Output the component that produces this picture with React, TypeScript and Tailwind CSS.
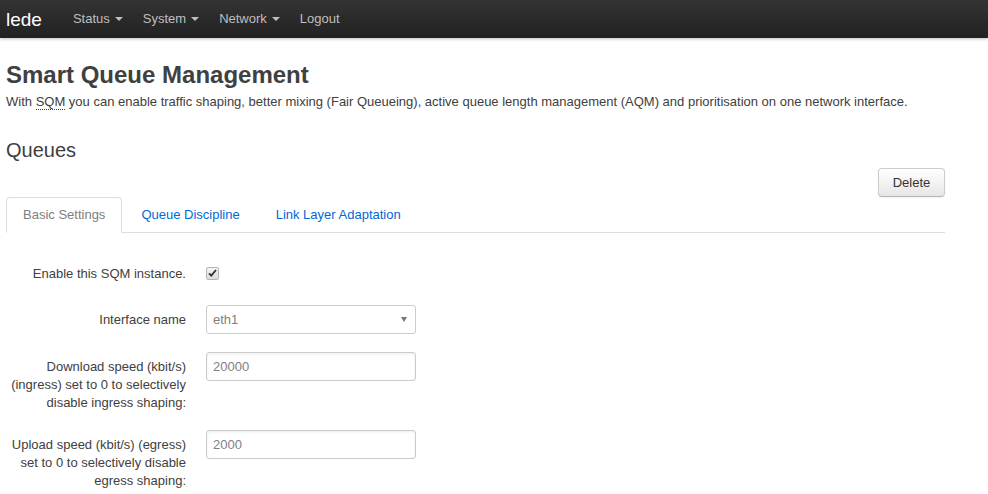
// Smart Queue Management — LuCI (bootstrap theme) settings page

const navItems = [
  { label: "Status", caret: true },
  { label: "System", caret: true },
  { label: "Network", caret: true },
  { label: "Logout", caret: false },
];

function Caret() {
  return (
    <span className="ml-[5px] inline-block h-0 w-0 border-x-[4px] border-t-[4px] border-x-transparent border-t-[#bfbfbf] align-middle" />
  );
}

function FormRow({ label, children }: { label: React.ReactNode; children: React.ReactNode }) {
  return (
    <div className="mb-[18px] flex items-start">
      <div className="w-[180px] shrink-0 pt-[6px] text-right leading-[18px] text-[#404040]">{label}</div>
      <div className="ml-[20px] flex min-h-[28px] items-center">{children}</div>
    </div>
  );
}

function TextField({ value }: { value: string }) {
  return (
    <div className="flex h-[29px] w-[210px] items-center rounded-[3px] border border-[#ccc] px-[6px] text-[#808080] shadow-[inset_0_1px_3px_rgba(0,0,0,0.08)]">
      {value}
    </div>
  );
}

export default function App() {
  return (
    <div className="min-h-screen bg-white text-[13px] text-[#404040]" style={{ fontFamily: '"Liberation Sans", Arial, sans-serif' }}>
      {/* Top navbar */}
      <nav className="flex h-[38px] items-center bg-gradient-to-b from-[#333] to-[#222] shadow-[0_1px_3px_rgba(0,0,0,0.25)]">
        <span className="pl-[6px] pr-[21px] text-[19px] leading-none text-white">lede</span>
        <div className="flex">
          {navItems.map((item) => (
            <span key={item.label} className="flex items-center px-[10px] text-[#bfbfbf]">
              {item.label}
              {item.caret && <Caret />}
            </span>
          ))}
        </div>
      </nav>

      <div className="pl-[6px] pr-[43px]">
        <h2 className="mt-[19px] text-[24px] font-bold leading-[36px]">Smart Queue Management</h2>
        <p className="leading-[18px]">
          With <abbr className="border-b border-dotted border-[#404040] no-underline">SQM</abbr> you can enable traffic shaping, better
          mixing (Fair Queueing), active queue length management (AQM) and prioritisation on one network interface.
        </p>

        <h3 className="mt-[24px] text-[20px] leading-[30px]">Queues</h3>

        <div className="mt-[3px] flex justify-end">
          <button className="h-[29px] w-[67px] rounded-[4px] border border-[#ccc] border-b-[#b3b3b3] bg-gradient-to-b from-white to-[#e6e6e6] text-[#333] shadow-[0_1px_2px_rgba(0,0,0,0.05)]">
            Delete
          </button>
        </div>

        {/* Tabs */}
        <ul className="flex h-[36px] border-b border-[#ddd]">
          <li className="-mb-px flex h-[36px] items-center rounded-t-[4px] border border-[#ddd] border-b-white bg-white px-[16px] text-[#808080]">
            Basic Settings
          </li>
          <li className="ml-[2px] flex items-center px-[17px] text-[#0069d6]">Queue Discipline</li>
          <li className="ml-[2px] flex items-center px-[17px] text-[#0069d6]">Link Layer Adaptation</li>
        </ul>

        {/* Form */}
        <div className="mt-[26px]">
          <FormRow label="Enable this SQM instance.">
            <span className="flex h-[13px] w-[13px] items-center justify-center rounded-[2px] border border-[#b5b5b5] bg-gradient-to-b from-[#f4f4f4] to-[#dcdcdc]">
              <svg width="9" height="8" viewBox="0 0 9 8">
                <path d="M1 4.3 L3.3 6.6 L8 1" fill="none" stroke="#333" strokeWidth="1.8" />
              </svg>
            </span>
          </FormRow>

          <FormRow label="Interface name">
            <div className="flex h-[29px] w-[210px] items-center justify-between rounded-[3px] border border-[#ccc] pl-[6px] pr-[8px] text-[#808080]">
              <span>eth1</span>
              <span className="inline-block h-0 w-0 border-x-[3.5px] border-t-[5px] border-x-transparent border-t-[#777]" />
            </div>
          </FormRow>

          <FormRow
            label={
              <>
                Download speed (kbit/s)
                <br />
                (ingress) set to 0 to selectively
                <br />
                disable ingress shaping:
              </>
            }
          >
            <TextField value="20000" />
          </FormRow>

          <FormRow
            label={
              <>
                Upload speed (kbit/s) (egress)
                <br />
                set to 0 to selectively disable
                <br />
                egress shaping:
              </>
            }
          >
            <TextField value="2000" />
          </FormRow>
        </div>
      </div>
    </div>
  );
}
